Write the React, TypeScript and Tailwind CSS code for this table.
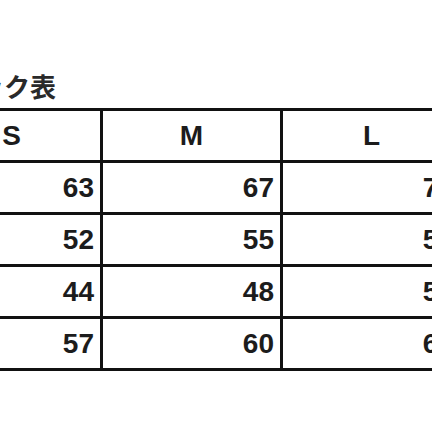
const sizes = ['S', 'M', 'L'];

const rows = [
  [63, 67, 71],
  [52, 55, 58],
  [44, 48, 52],
  [57, 60, 63],
];

export default function App() {
  return (
    <div className="w-[432px] h-[432px] overflow-hidden bg-white text-[#1c1c1c]" style={{ fontFamily: '"Liberation Sans", Arial, sans-serif' }}>
      <div className="pt-[70px] h-[108px]">
        <div
          className="w-[56px] flex justify-end whitespace-nowrap text-[26px] leading-[32px] font-bold text-[#2a2a2a]"
          style={{ fontFamily: '"Noto Sans CJK JP", sans-serif' }}
        >
          サイズチェック表
        </div>
      </div>

      <div className="ml-[-77px] w-[540px] grid grid-cols-[180px_180px_180px] border-t-[3px] border-[#111]">
        {sizes.map((s) => (
          <div
            key={s}
            className="h-[52px] border-r-[3px] border-b-[3px] border-[#111] flex items-center justify-center text-[28px] font-bold"
          >
            {s}
          </div>
        ))}
        {rows.map((r, i) =>
          r.map((v, j) => (
            <div
              key={i + '-' + j}
              className="h-[52px] border-r-[3px] border-b-[3px] border-[#111] flex items-center justify-end pr-[6px] text-[28px] font-bold"
            >
              {v}
            </div>
          ))
        )}
      </div>
    </div>
  );
}
